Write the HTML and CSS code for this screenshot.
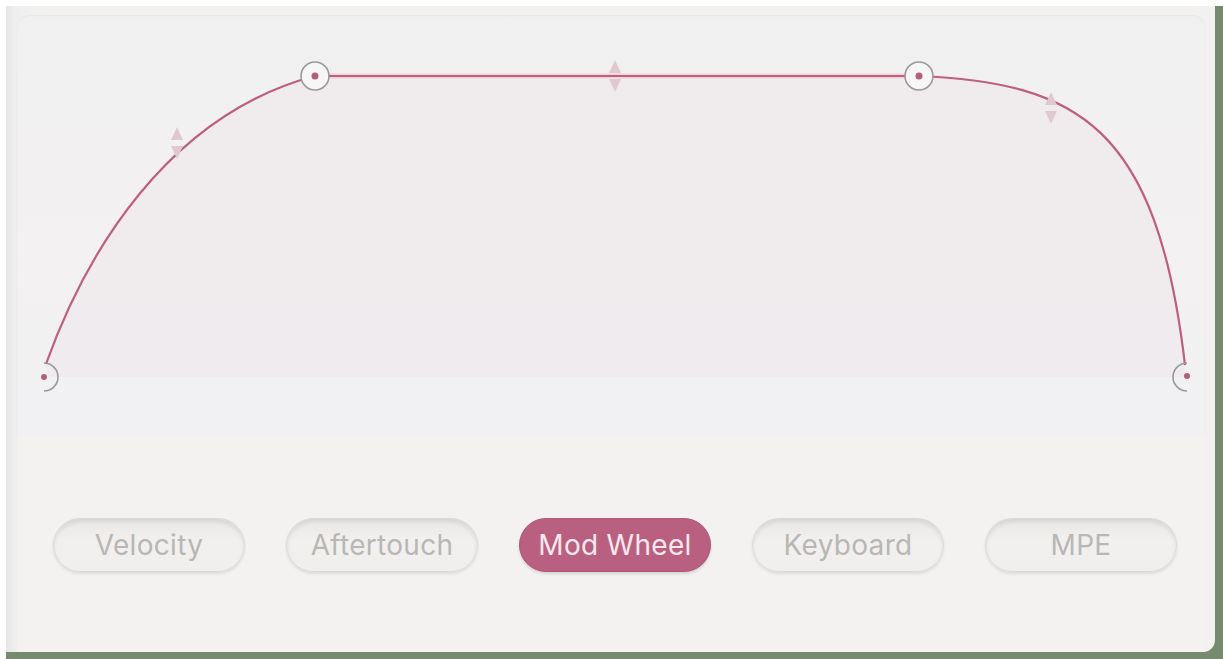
FILE: index.html
```html
<!DOCTYPE html>
<html lang="en">
<head>
    <meta charset="UTF-8">
    <meta name="viewport" content="width=device-width, initial-scale=1.0">
    <title>Modulation Curve</title>
    <link rel="stylesheet" href="styles.css">
</head>
<body>
    <div class="frame">
        <div class="panel">
            <div class="graph">
                <svg class="curve" width="1188" height="420" viewBox="0 0 1188 420">
                    <path class="area" d="M29 349 C 68 240, 150 100, 298 61 L 902 61 C 1060 68, 1140 110, 1168 350 L 1168 362 L 29 362 Z"/>
                    <path class="glow" d="M298 61 L 902 61"/>
                    <path class="line" d="M29 349 C 68 240, 150 100, 298 61 L 902 61 C 1060 68, 1140 110, 1168 350"/>

                    <g class="handle">
                        <path d="M160 112 L166 125 L154 125 Z"/>
                        <path d="M154 131 L166 131 L160 144 Z"/>
                        <path d="M598 45 L604 58 L592 58 Z"/>
                        <path d="M592 64 L604 64 L598 77 Z"/>
                        <path d="M1034 77 L1040 90 L1028 90 Z"/>
                        <path d="M1028 96 L1040 96 L1034 109 Z"/>
                    </g>

                    <g class="node">
                        <circle cx="298" cy="61" r="14"/>
                        <circle cx="902" cy="61" r="14"/>
                        <path d="M27 348 A14 14 0 0 1 27 376"/>
                        <path d="M1170 348 A14 14 0 0 0 1170 376"/>
                    </g>
                    <g class="dot">
                        <circle cx="298" cy="61" r="3.5"/>
                        <circle cx="902" cy="61" r="3.5"/>
                        <circle cx="27" cy="362" r="3"/>
                        <circle cx="1170" cy="361" r="3"/>
                    </g>
                </svg>
            </div>
            <div class="controls">
                <button class="source">Velocity</button>
                <button class="source">Aftertouch</button>
                <button class="source active">Mod Wheel</button>
                <button class="source">Keyboard</button>
                <button class="source">MPE</button>
            </div>
        </div>
    </div>
</body>
</html>
```

FILE: styles.css
```css
body {
    margin: 0;
    background: #ffffff;
    font-family: Inter, "Liberation Sans", Arial, sans-serif;
}
.frame {
    margin: 6px 0 0 6px;
    width: 1217px;
    height: 653px;
    background: #768a70;
}
.panel {
    width: 1209px;
    height: 646px;
    box-sizing: border-box;
    padding: 9px 10px 0 11px;
    background: linear-gradient(90deg, #e6e6e6 0px, #efefef 11px, #f2f1f0 40px);
    border-radius: 0 0 12px 0;
    display: flex;
    flex-direction: column;
}
.graph {
    height: 420px;
    background: linear-gradient(180deg, #f1f0f0 0%, #f3f1f1 60%, #f1f1f3 100%);
    border-radius: 12px 12px 0 0;
    box-shadow: inset 0 1px 2px rgba(0, 0, 0, 0.04), 0 2px 2px rgba(0, 0, 0, 0.03);
}
.curve {
    display: block;
}
.area {
    fill: #ede4e8;
    opacity: 0.45;
}
.glow {
    fill: none;
    stroke: #f0b9cb;
    stroke-width: 5;
    opacity: 0.55;
}
.line {
    fill: none;
    stroke: #bd5f7d;
    stroke-width: 2.2;
}
.handle path {
    fill: #dfc8d0;
}
.node circle,
.node path {
    fill: #f7f6f6;
    stroke: #9b9898;
    stroke-width: 1.6;
}
.node path {
    fill: none;
}
.dot circle {
    fill: #b0607a;
}
.controls {
    flex: 1;
    background: #f4f2f0;
    display: flex;
    gap: 41px;
    padding: 83px 0 0 36px;
}
.source {
    width: 192px;
    height: 54px;
    border-radius: 27px;
    border: 1px solid #dcdad8;
    background: linear-gradient(180deg, #e9e7e5 0%, #f2f0ee 40%, #f1efed 100%);
    box-shadow: inset 0 3px 4px rgba(0, 0, 0, 0.08), 0 2px 3px rgba(0, 0, 0, 0.09);
    color: #b8b7b6;
    font-family: Inter, "Liberation Sans", Arial, sans-serif;
    font-size: 28px;
    letter-spacing: 0.3px;
    padding: 0;
    cursor: pointer;
}
.source.active {
    background: #b95f80;
    border-color: #b05776;
    color: #fbe8ef;
    box-shadow: 0 2px 3px rgba(0, 0, 0, 0.12);
}
```
